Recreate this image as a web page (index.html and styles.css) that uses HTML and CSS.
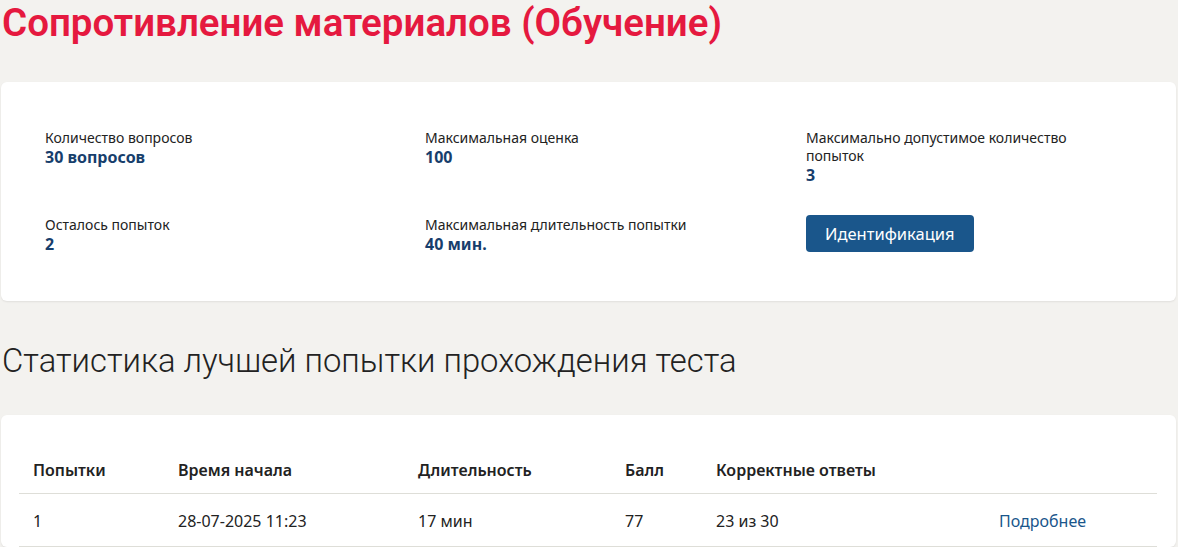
FILE: index.html
```html
<!DOCTYPE html>
<html lang="ru">
<head>
  <meta charset="UTF-8">
  <meta name="viewport" content="width=device-width, initial-scale=1.0">
  <title>Сопротивление материалов (Обучение)</title>
  <link rel="stylesheet" href="styles.css">
</head>
<body>
  <main class="page">
    <h1 class="test-title">Сопротивление материалов (Обучение)</h1>

    <section class="card info-card">
      <div class="info-grid">
        <div class="info-item">
          <span class="info-label">Количество вопросов</span>
          <strong class="info-value">30 вопросов</strong>
        </div>
        <div class="info-item">
          <span class="info-label">Максимальная оценка</span>
          <strong class="info-value">100</strong>
        </div>
        <div class="info-item">
          <span class="info-label">Максимально допустимое количество попыток</span>
          <strong class="info-value">3</strong>
        </div>
        <div class="info-item">
          <span class="info-label">Осталось попыток</span>
          <strong class="info-value">2</strong>
        </div>
        <div class="info-item">
          <span class="info-label">Максимальная длительность попытки</span>
          <strong class="info-value">40 мин.</strong>
        </div>
        <div class="info-item">
          <button class="btn-primary" type="button">Идентификация</button>
        </div>
      </div>
    </section>

    <h2 class="section-title">Статистика лучшей попытки прохождения теста</h2>

    <section class="card table-card">
      <table class="attempts">
        <thead>
          <tr>
            <th class="col-num">Попытки</th>
            <th class="col-start">Время начала</th>
            <th class="col-dur">Длительность</th>
            <th class="col-score">Балл</th>
            <th class="col-correct">Корректные ответы</th>
            <th></th>
          </tr>
        </thead>
        <tbody>
          <tr>
            <td>1</td>
            <td>28-07-2025 11:23</td>
            <td>17 мин</td>
            <td>77</td>
            <td>23 из 30</td>
            <td><a href="#" class="more-link">Подробнее</a></td>
          </tr>
        </tbody>
      </table>
    </section>
  </main>
</body>
</html>
```

FILE: styles.css
```css
body {
  margin: 0;
  background: #f3f2ef;
  font-family: 'Noto Sans', 'Open Sans', sans-serif;
  color: #222;
}
.page {
  padding: 0 2px 0 1px;
}
.test-title {
  margin: 0;
  padding: 0 0 0 1px;
  font-family: Roboto, 'Noto Sans', sans-serif;
  font-weight: 600;
  font-size: 38.5px;
  line-height: 46px;
  color: #e5193f;
}
.card {
  background: #fff;
  border-radius: 6px;
  box-shadow: 0 1px 2px rgba(0,0,0,0.08);
}
.info-card {
  margin-top: 36px;
  padding: 47px 20px 47px 44px;
}
.info-grid {
  display: grid;
  grid-template-columns: 380px 381px 290px;
  row-gap: 31px;
}
.info-item {
  display: flex;
  flex-direction: column;
  align-items: flex-start;
}
.info-label {
  font-size: 14px;
  line-height: 18px;
  color: #222;
}
.info-value {
  font-size: 16px;
  line-height: 20px;
  font-weight: 700;
  color: #173e6c;
}
.btn-primary {
  margin-top: -1px;
  height: 37px;
  padding: 0 19px;
  border: none;
  border-radius: 4px;
  background: #1a568b;
  color: #fff;
  font-family: inherit;
  font-size: 16.5px;
}
.section-title {
  margin: 40px 0 0 1px;
  font-family: Roboto, 'Noto Sans', sans-serif;
  font-weight: 300;
  font-size: 32.8px;
  line-height: 40px;
  color: #222;
}
.table-card {
  margin-top: 34px;
  padding: 33px 19px 0 18px;
}
.attempts {
  width: 100%;
  border-collapse: collapse;
}
.attempts th,
.attempts td {
  padding: 12px 14px;
  text-align: left;
  font-size: 16px;
  line-height: 21px;
  border-bottom: 1px solid #deded8;
}
.attempts th {
  font-weight: 600;
  color: #222;
}
.attempts td {
  padding-top: 17px;
  padding-bottom: 14px;
}
.col-num { width: 117px; }
.col-start { width: 212px; }
.col-dur { width: 179px; }
.col-score { width: 63px; }
.col-correct { width: 255px; }
.more-link {
  color: #1a568b;
  text-decoration: none;
}
```
